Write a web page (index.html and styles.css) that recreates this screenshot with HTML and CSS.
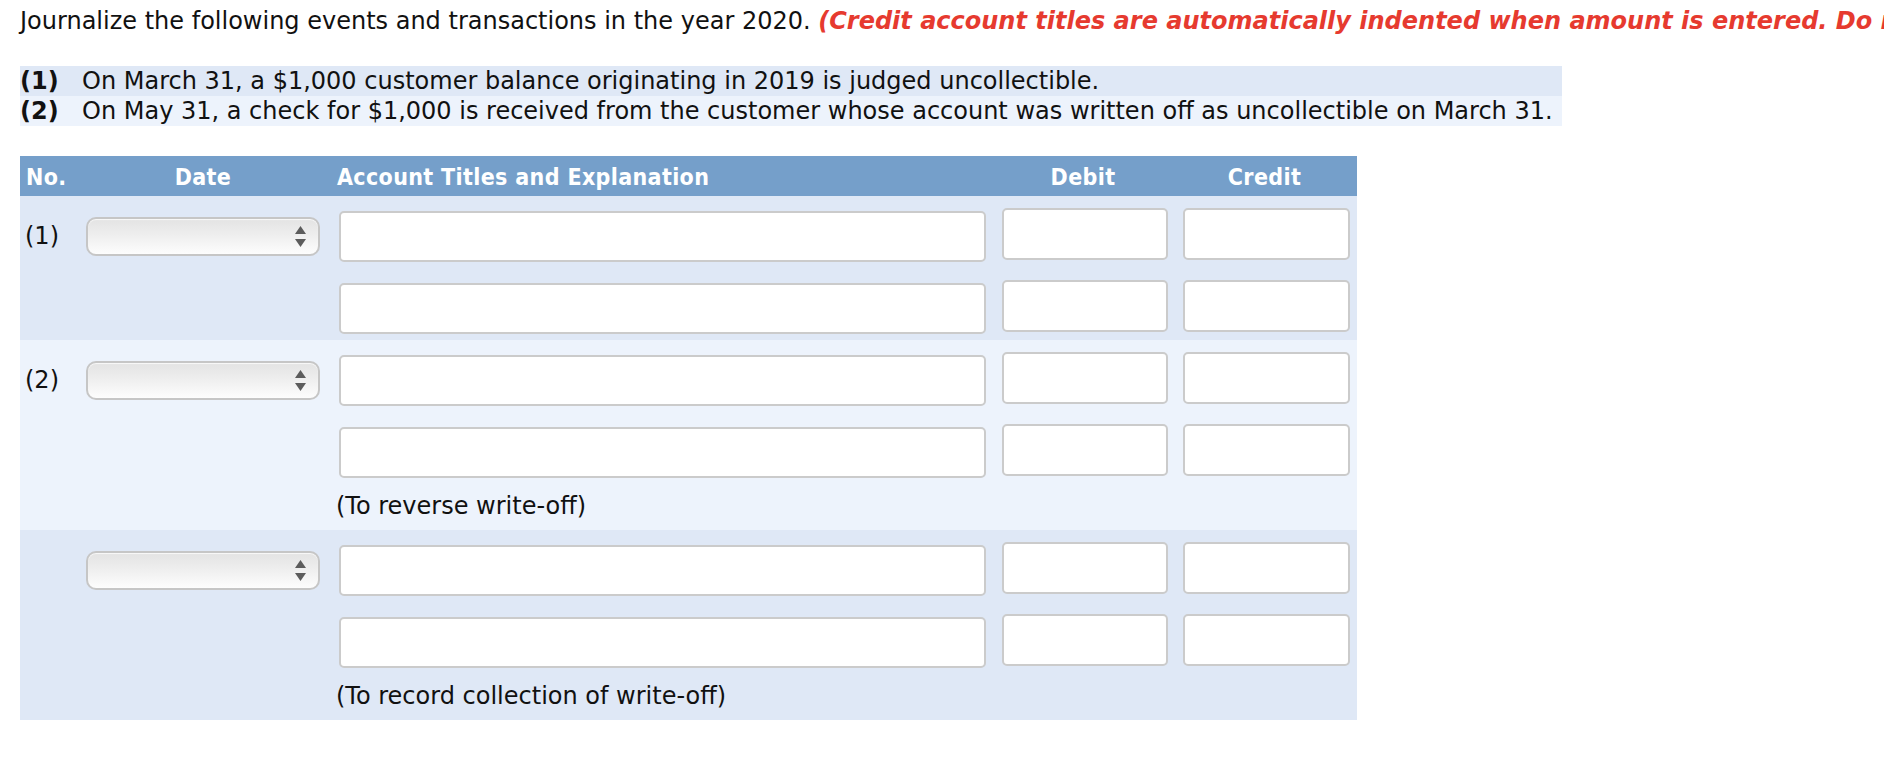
FILE: index.html
```html
<!DOCTYPE html>
<html lang="en">
<head>
<meta charset="utf-8">
<title>Journal entries</title>
<link rel="stylesheet" href="styles.css">
</head>
<body>
<p class="intro">Journalize the following events and transactions in the year 2020. <span class="note">(Credit account titles are automatically indented when amount is entered. Do not indent manually.)</span></p>

<div class="problems">
  <div class="problem"><span class="pnum">(1)</span><span>On March 31, a $1,000 customer balance originating in 2019 is judged uncollectible.</span></div>
  <div class="problem"><span class="pnum">(2)</span><span>On May 31, a check for $1,000 is received from the customer whose account was written off as uncollectible on March 31.</span></div>
</div>

<div class="journal">
  <div class="jhead">
    <div class="h-no">No.</div>
    <div class="h-date">Date</div>
    <div class="h-acct">Account Titles and Explanation</div>
    <div class="h-debit">Debit</div>
    <div class="h-credit">Credit</div>
  </div>

  <div class="entry entry-dark">
    <div class="line">
      <div class="no">(1)</div>
      <div class="date"><svg class="arrows" width="11" height="21" viewBox="0 0 11 21"><path d="M5.5 0 L11 8 L0 8 Z M0 13 L11 13 L5.5 21 Z"/></svg></div>
      <input class="acct" type="text">
      <input class="amt debit" type="text">
      <input class="amt credit" type="text">
    </div>
    <div class="line">
      <div class="no"></div>
      <div class="date-space"></div>
      <input class="acct" type="text">
      <input class="amt debit" type="text">
      <input class="amt credit" type="text">
    </div>
  </div>

  <div class="entry entry-light">
    <div class="line">
      <div class="no">(2)</div>
      <div class="date"><svg class="arrows" width="11" height="21" viewBox="0 0 11 21"><path d="M5.5 0 L11 8 L0 8 Z M0 13 L11 13 L5.5 21 Z"/></svg></div>
      <input class="acct" type="text">
      <input class="amt debit" type="text">
      <input class="amt credit" type="text">
    </div>
    <div class="line">
      <div class="no"></div>
      <div class="date-space"></div>
      <input class="acct" type="text">
      <input class="amt debit" type="text">
      <input class="amt credit" type="text">
    </div>
    <div class="expl">(To reverse write-off)</div>
  </div>

  <div class="entry entry-dark">
    <div class="line">
      <div class="no"></div>
      <div class="date"><svg class="arrows" width="11" height="21" viewBox="0 0 11 21"><path d="M5.5 0 L11 8 L0 8 Z M0 13 L11 13 L5.5 21 Z"/></svg></div>
      <input class="acct" type="text">
      <input class="amt debit" type="text">
      <input class="amt credit" type="text">
    </div>
    <div class="line">
      <div class="no"></div>
      <div class="date-space"></div>
      <input class="acct" type="text">
      <input class="amt debit" type="text">
      <input class="amt credit" type="text">
    </div>
    <div class="expl">(To record collection of write-off)</div>
  </div>
</div>
</body>
</html>
```

FILE: styles.css
```css
html, body {
  margin: 0;
  background: #fff;
}
body {
  padding: 7px 0 0 20px;
  font-family: "DejaVu Sans", Verdana, sans-serif;
  font-size: 24px;
  color: #111;
  overflow: hidden;
}
.intro {
  margin: 0;
  line-height: 28px;
  white-space: nowrap;
}
.note {
  color: #e63a2f;
  font-weight: bold;
  font-style: italic;
}
.problems {
  margin-top: 31px;
  width: 1542px;
}
.problem {
  display: flex;
  height: 30px;
  line-height: 30px;
  white-space: nowrap;
}
.problem:nth-child(odd) { background: #dfe8f6; }
.problem:nth-child(even) { background: #edf3fc; }
.pnum {
  width: 62px;
  flex: none;
  font-weight: bold;
}
.journal {
  width: 1337px;
  margin-top: 30px;
}
.jhead {
  display: flex;
  align-items: center;
  height: 40px;
  padding-top: 2px;
  box-sizing: border-box;
  background: #759fca;
  color: #fff;
  font-family: "DejaVu Sans Condensed", "DejaVu Sans", sans-serif;
  font-weight: bold;
  font-size: 23px;
  letter-spacing: 0.35px;
  white-space: nowrap;
}
.h-no { width: 66px; padding-left: 6px; box-sizing: border-box; }
.h-date { width: 234px; margin-right: 19px; text-align: center; }
.h-acct { width: 647px; margin-right: 16px; margin-left: -2px; padding-right: 2px; box-sizing: border-box; }
.h-debit { width: 166px; margin-right: 15px; text-align: center; }
.h-credit { width: 167px; text-align: center; }

.entry {
  padding: 12px 0 6px;
}
.entry-dark { background: #dfe8f6; }
.entry-light { background: #edf3fc; }
.entry:has(.expl) { padding-bottom: 10px; }
.line {
  display: flex;
  align-items: flex-start;
}
.line + .line { margin-top: 18px; }
.no {
  width: 66px;
  flex: none;
  padding-left: 5px;
  box-sizing: border-box;
  margin-top: 14px;
  line-height: 28px;
}
.date, .date-space {
  width: 234px;
  flex: none;
  margin-right: 19px;
}
.date {
  height: 39px;
  margin-top: 9px;
  box-sizing: border-box;
  border: 2px solid #c6c6c6;
  border-radius: 10px;
  background: linear-gradient(#e3e3e3, #eeeeee 45%, #fdfdfd);
  box-shadow: inset 0 1px 1px rgba(255,255,255,.8);
  display: flex;
  align-items: center;
  justify-content: flex-end;
  padding-right: 12px;
}
.arrows path { fill: #5c5c5c; }
input {
  display: block;
  box-sizing: border-box;
  margin: 0;
  padding: 0 8px;
  border: 2px solid #cbcbcb;
  border-radius: 5px;
  background: #fff;
  font: inherit;
  outline: none;
}
.acct {
  width: 647px;
  height: 51px;
  margin-top: 3px;
  margin-right: 16px;
  flex: none;
}
.amt {
  height: 52px;
  flex: none;
}
.debit { width: 166px; margin-right: 15px; }
.credit { width: 167px; }
.expl {
  margin: 14px 0 0 316px;
  line-height: 28px;
  white-space: nowrap;
}
```
